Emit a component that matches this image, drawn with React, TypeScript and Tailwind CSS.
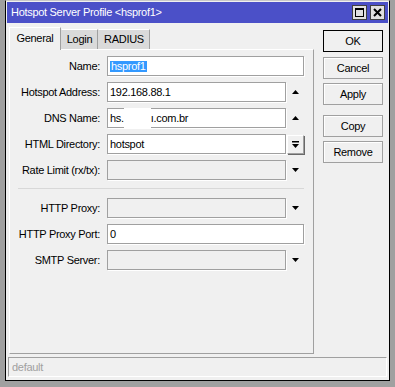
import React from 'react';

type Trail = 'none' | 'up' | 'down' | 'list';

type Row = {
  label: string;
  value?: React.ReactNode;
  disabled?: boolean;
  trail: Trail;
};

function UpArrow() {
  return (
    <svg width="9" height="6" viewBox="0 0 9 6">
      <path d="M4.5 1 L8 5 L1 5 Z" fill="#000" />
    </svg>
  );
}

function DownArrow() {
  return (
    <svg width="9" height="6" viewBox="0 0 9 6">
      <path d="M1 1 L8 1 L4.5 5 Z" fill="#000" />
    </svg>
  );
}

function ListButton() {
  return (
    <div className="flex h-[19px] w-[17px] items-center justify-center border border-t-white border-l-white border-r-[#a0a0a0] border-b-[#a0a0a0] bg-[#f0f0f0] shadow-[1px_1px_0_#696969]">
      <svg width="9" height="9" viewBox="0 0 9 9">
        <rect x="1" y="1" width="7" height="1.5" fill="#000" />
        <path d="M1 4 L8 4 L4.5 8 Z" fill="#000" />
      </svg>
    </div>
  );
}

function FieldRow({ row }: { row: Row }) {
  return (
    <div className="flex h-[20px] items-center">
      <div className="w-[91px] pr-[1px] text-right">{row.label}</div>
      <div className="ml-[6px] flex flex-1 items-center">
        <div
          className={
            'relative flex h-[20px] flex-1 items-center border border-[#a0a0a0] px-[2px] shadow-[1px_1px_0_#fff] ' +
            (row.disabled ? 'bg-[#f0f0f0]' : 'bg-white')
          }
        >
          {row.value}
        </div>
        {row.trail !== 'none' && (
          <div className="flex w-[18px] items-center justify-center">
            {row.trail === 'up' && <UpArrow />}
            {row.trail === 'down' && <DownArrow />}
            {row.trail === 'list' && <ListButton />}
          </div>
        )}
      </div>
    </div>
  );
}

const topRows: Row[] = [
  {
    label: 'Name:',
    trail: 'none',
    value: <span className="bg-[#3399ff] px-[1px] text-white">hsprof1</span>,
  },
  { label: 'Hotspot Address:', trail: 'up', value: '192.168.88.1' },
  {
    label: 'DNS Name:',
    trail: 'up',
    value: (
      <>
        <span>hs.</span>
        <span className="absolute top-[-1px] bottom-[-2px] left-[16px] w-[27px] bg-white" />
        <span className="ml-[27px]">ı.com.br</span>
      </>
    ),
  },
  { label: 'HTML Directory:', trail: 'list', value: 'hotspot' },
  { label: 'Rate Limit (rx/tx):', trail: 'down', disabled: true },
];

const bottomRows: Row[] = [
  { label: 'HTTP Proxy:', trail: 'down', disabled: true },
  { label: 'HTTP Proxy Port:', trail: 'none', value: '0' },
  { label: 'SMTP Server:', trail: 'down', disabled: true },
];

function WinButton({ label, primary }: { label: string; primary?: boolean }) {
  return (
    <div
      className={
        'flex h-[22px] w-[60px] items-center justify-center bg-[#f0f0f0] ' +
        (primary
          ? 'border border-black'
          : 'border border-[#a0a0a0] shadow-[inset_1px_1px_0_#fff]')
      }
    >
      {label}
    </div>
  );
}

export default function App() {
  return (
    <div
      className="h-[387px] w-[395px] bg-[#a0a0a0] pl-[5px] text-[11px] leading-none tracking-[-0.3px] text-black"
      style={{ fontFamily: '"Liberation Sans", Arial, sans-serif' }}
    >
      <div className="flex h-[381px] w-[385px] flex-col border border-t-[#c8c8c8] border-l-black border-r-black border-b-black bg-[#f0f0f0] p-[1px]">
        {/* title bar */}
        <div className="flex h-[21px] items-center justify-between bg-[#4b50c8] pl-[4px] pr-[3px] text-white">
          <span className="text-[11px]">Hotspot Server Profile &lt;hsprof1&gt;</span>
          <div className="flex gap-[3px]">
            <div className="flex h-[15px] w-[15px] items-center justify-center border border-[#404040] bg-[#e0e0e0]">
              <div className="h-[9px] w-[9px] border border-t-2 border-black" />
            </div>
            <div className="flex h-[15px] w-[15px] items-center justify-center border border-[#404040] bg-[#e0e0e0]">
              <svg width="9" height="9" viewBox="0 0 9 9">
                <path d="M1 1 L8 8 M8 1 L1 8" stroke="#000" strokeWidth="2" />
              </svg>
            </div>
          </div>
        </div>

        <div className="mt-[4px] flex flex-1 pl-[2px]">
          {/* tabs + panel */}
          <div className="flex w-[305px] flex-col">
            <div className="flex items-end">
              <div className="relative z-10 -mb-[1px] flex h-[23px] w-[52px] items-center justify-center border border-b-0 border-t-white border-l-white border-r-[#a0a0a0] bg-[#f0f0f0] pb-[2px]">
                General
              </div>
              <div className="flex h-[20px] w-[37px] items-center justify-center border border-b-0 border-t-white border-r-[#a0a0a0] border-l-transparent bg-[#dadada]">
                Login
              </div>
              <div className="flex h-[20px] w-[52px] items-center justify-center border border-b-0 border-t-white border-r-[#a0a0a0] border-l-transparent bg-[#dadada]">
                RADIUS
              </div>
            </div>
            <div className="h-[305px] border border-t-white border-l-white border-r-[#a0a0a0] border-b-[#a0a0a0] pt-[6px] pr-[9px]">
              <div className="flex flex-col gap-[6px]">
                {topRows.map((r) => (
                  <FieldRow key={r.label} row={r} />
                ))}
              </div>
              <div className="mt-[8px] mb-[9px] ml-[8px] border-t border-[#d8d8d8]" />
              <div className="flex flex-col gap-[6px]">
                {bottomRows.map((r) => (
                  <FieldRow key={r.label} row={r} />
                ))}
              </div>
            </div>
          </div>

          {/* buttons */}
          <div className="ml-[9px] flex flex-col pt-[3px]">
            <WinButton label="OK" primary />
            <div className="mt-[5px] flex flex-col gap-[4px]">
              <WinButton label="Cancel" />
              <WinButton label="Apply" />
            </div>
            <div className="mt-[10px] flex flex-col gap-[4px]">
              <WinButton label="Copy" />
              <WinButton label="Remove" />
            </div>
          </div>
        </div>

        {/* status bar */}
        <div className="mx-[1px] mb-[2px] flex h-[20px] items-center border border-t-[#a0a0a0] border-l-[#a0a0a0] border-r-white border-b-white px-[3px] text-[#a0a0a0]">
          default
        </div>
      </div>
    </div>
  );
}
